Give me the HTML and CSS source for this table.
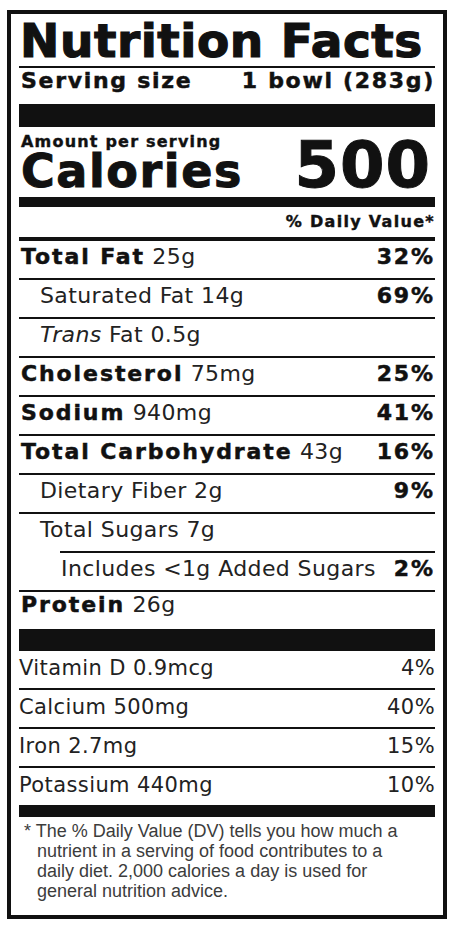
FILE: index.html
```html
<!DOCTYPE html>
<html lang="en">
<head>
<meta charset="utf-8">
<title>Nutrition Facts</title>
<link rel="stylesheet" href="styles.css">
</head>
<body>
<section class="label">
  <h1 class="title">Nutrition Facts</h1>
  <div class="serving"><span>Serving size</span><span>1 bowl (283g)</span></div>
  <div class="calories">
    <div class="cal-left">
      <div class="amount">Amount per serving</div>
      <div class="cal-word">Calories</div>
    </div>
    <div class="cal-num">500</div>
  </div>
  <div class="dv-head">% Daily Value*</div>

  <div class="row"><span><b>Total Fat</b> 25g</span><b>32%</b></div>
  <div class="row sub"><span>Saturated Fat 14g</span><b>69%</b></div>
  <div class="row sub"><span><i>Trans</i> Fat 0.5g</span></div>
  <div class="row"><span><b>Cholesterol</b> 75mg</span><b>25%</b></div>
  <div class="row"><span><b>Sodium</b> 940mg</span><b>41%</b></div>
  <div class="row"><span><b>Total Carbohydrate</b> 43g</span><b>16%</b></div>
  <div class="row sub"><span>Dietary Fiber 2g</span><b>9%</b></div>
  <div class="row sub no-rule"><span>Total Sugars 7g</span></div>
  <div class="subrule"></div>
  <div class="row sub2"><span>Includes &lt;1g Added Sugars</span><b>2%</b></div>
  <div class="row protein"><span><b>Protein</b> 26g</span></div>

  <div class="vitamins">
    <div class="row vit"><span>Vitamin D 0.9mcg</span><span>4%</span></div>
    <div class="row vit"><span>Calcium 500mg</span><span>40%</span></div>
    <div class="row vit"><span>Iron 2.7mg</span><span>15%</span></div>
    <div class="row vit last"><span>Potassium 440mg</span><span>10%</span></div>
  </div>

  <p class="foot">* The % Daily Value (DV) tells you how much a nutrient in a serving of food contributes to a daily diet. 2,000 calories a day is used for general nutrition advice.</p>
</section>
</body>
</html>
```

FILE: styles.css
```css
* {
  box-sizing: border-box;
  margin: 0;
  padding: 0;
}

html,
body {
  background: #fff;
}

body {
  font-family: "DejaVu Sans", "Liberation Sans", sans-serif;
  color: #111;
}

.label {
  width: 440px;
  margin: 10px 0 0 7px;
  border: 4px solid #111;
  padding: 0 8px 14px;
}

.title {
  height: 54px;
  font: bold 47px/48px "DejaVu Sans", sans-serif;
  letter-spacing: 0.55px;
  padding: 3px 0 1px 1px;
  border-bottom: 2px solid #111;
  white-space: nowrap;
  -webkit-text-stroke: 1.2px #111;
}

.serving {
  display: flex;
  justify-content: space-between;
  height: 36px;
  font: bold 22px/26px "DejaVu Sans", sans-serif;
  letter-spacing: 1.7px;
  padding: 0 0 10px 2px;
  white-space: nowrap;
  -webkit-text-stroke: 0.5px #111;
}

.calories {
  display: flex;
  justify-content: space-between;
  align-items: flex-end;
  height: 103px;
  border-top: 23px solid #111;
  border-bottom: 10px solid #111;
  padding: 6px 0;
  font-weight: bold;
  -webkit-text-stroke: 0.4px #111;
}

.cal-left {
  padding-left: 2px;
}

.amount {
  font-size: 16px;
  line-height: 18px;
  letter-spacing: 1.2px;
}

.cal-word {
  font-size: 46px;
  line-height: 40px;
  letter-spacing: 1.6px;
  -webkit-text-stroke: 1px #111;
}

.cal-num {
  font-size: 64px;
  line-height: 52px;
  letter-spacing: 1px;
  padding-right: 4px;
  -webkit-text-stroke: 1px #111;
}

.dv-head {
  height: 34px;
  text-align: right;
  font: bold 16px/30px "DejaVu Sans", sans-serif;
  letter-spacing: 1.3px;
  border-bottom: 4px solid #111;
  -webkit-text-stroke: 0.4px #111;
}

.row {
  display: flex;
  justify-content: space-between;
  align-items: baseline;
  height: 39px;
  font-size: 22px;
  line-height: 31px;
  letter-spacing: 0.4px;
  color: #222;
  padding-bottom: 6px;
  border-bottom: 2px solid #111;
  white-space: nowrap;
}

.row b {
  font-size: 22px;
  font-weight: bold;
  letter-spacing: 1.9px;
  color: #111;
  -webkit-text-stroke: 0.5px #111;
}

.row > span:first-child > b:first-child {
  margin-left: 2px;
}

.row.sub > span:first-child {
  padding-left: 21px;
}

.row.sub2 > span:first-child {
  padding-left: 42px;
}

.row.no-rule {
  height: 37px;
  border-bottom: none;
}

.subrule {
  height: 2px;
  margin-left: 41px;
  background: #111;
}

.row.protein {
  height: 37px;
  line-height: 25px;
  padding-bottom: 12px;
  border-bottom: none;
}

.vitamins {
  border-top: 22px solid #111;
}

.row.vit {
  font-size: 21px;
  padding: 2px 0 4px;
}

.row.vit.last {
  height: 49px;
  border-bottom: 12px solid #111;
}

.foot {
  font: 18px/20px "Liberation Sans", Arial, sans-serif;
  color: #3c3c3c;
  padding: 4px 24px 0 18px;
  text-indent: -13px;
}
```
